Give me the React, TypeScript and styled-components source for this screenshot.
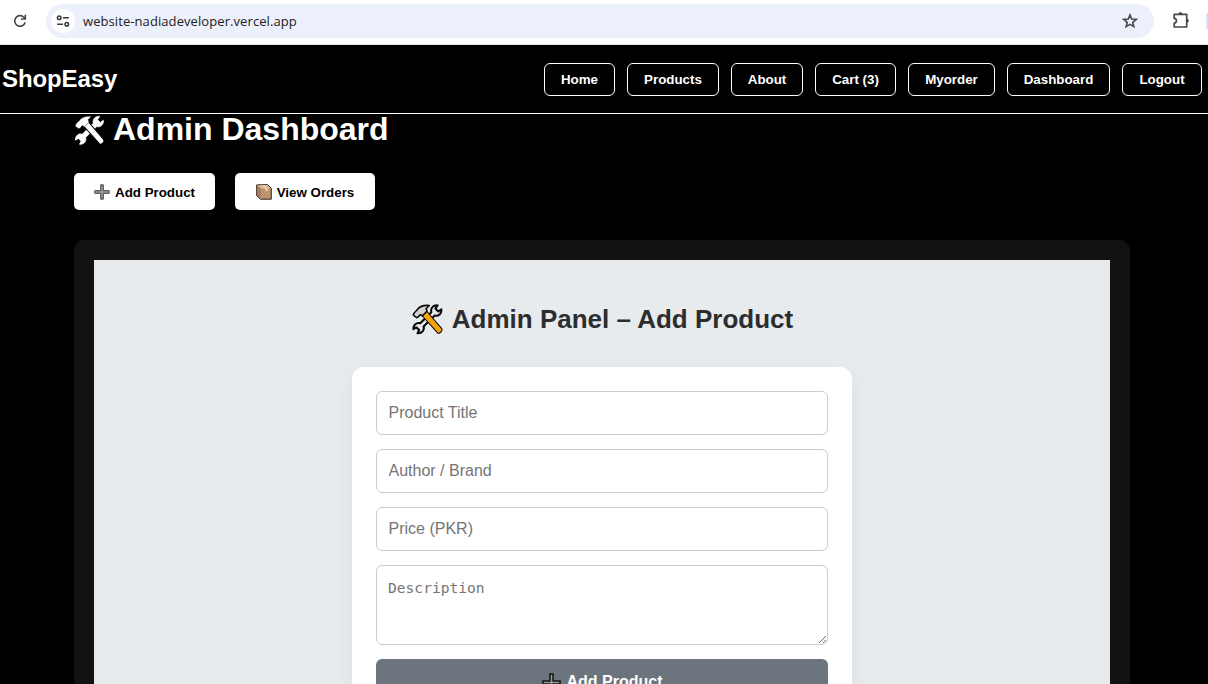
import React from 'react';
import styled, { createGlobalStyle } from 'styled-components';

const Global = createGlobalStyle`
  * { box-sizing: border-box; }
  body { margin: 0; background: #000; font-family: "Liberation Sans", Arial, sans-serif; overflow: hidden; }
  h1, h2 { margin: 0; }
  button, input { font-family: inherit; }
`;

const Screen = styled.div`
  height: 684px;
  overflow: hidden;
  display: flex;
  flex-direction: column;
`;

const BrowserBar = styled.div`
  flex: none;
  height: 45px;
  background: #fff;
  border-bottom: 1px solid #dfe1e5;
  display: flex;
  align-items: flex-start;
  overflow: hidden;
`;

const Reload = styled.svg`
  flex: none;
  width: 16px;
  height: 16px;
  margin: 13px 18px 0 12px;
`;

const AddressBar = styled.div`
  flex: none;
  width: 1108px;
  height: 34px;
  margin-top: 4px;
  padding: 0 16px 0 5px;
  border-radius: 17px;
  background: #ecf0fa;
  display: flex;
  align-items: center;
`;

const SiteInfo = styled.span`
  width: 24px;
  height: 24px;
  border-radius: 50%;
  background: #fff;
  display: flex;
  align-items: center;
  justify-content: center;
`;

const Url = styled.span`
  flex: 1;
  margin-left: 8px;
  font: 13px/18px "Open Sans", "Noto Sans", sans-serif;
  letter-spacing: 0.08px;
  color: #1f2023;
`;

const Extension = styled.svg`
  flex: none;
  width: 20px;
  height: 20px;
  margin: 10px 0 0 17px;
`;

const ToolbarDivider = styled.span`
  flex: none;
  width: 2px;
  height: 16px;
  margin: 13px 0 0 15px;
  background: #d3e3fd;
`;

const Header = styled.header`
  flex: none;
  height: 69px;
  padding: 0 6px 0 2px;
  border-bottom: 1px solid #fff;
  background: #000;
  display: flex;
  align-items: center;
  justify-content: space-between;
`;

const Brand = styled.div`
  font-size: 24px;
  font-weight: 700;
  letter-spacing: -0.1px;
  color: #fff;
`;

const Nav = styled.nav`
  display: flex;
  gap: 12px;
`;

const NavButton = styled.button<{ $width: number }>`
  width: ${(p) => p.$width}px;
  height: 33px;
  padding: 0;
  border: 1px solid #fff;
  border-radius: 6px;
  background: #000;
  color: #fff;
  font-size: 13.333px;
  font-weight: 700;
`;

const Main = styled.main`
  width: 1056px;
  margin-left: 74px;
`;

const PageTitle = styled.h1`
  height: 37px;
  margin-top: -3px;
  display: flex;
  align-items: center;
  gap: 8px;
  color: #fff;
  font-size: 32px;
  line-height: 37px;
  white-space: nowrap;
  svg { margin-top: 2px; }
`;

const Actions = styled.div`
  display: flex;
  gap: 20px;
  margin-top: 25px;
`;

const ActionButton = styled.button<{ $width: number }>`
  width: ${(p) => p.$width}px;
  height: 37px;
  padding: 2px 0 0;
  border: 0;
  border-radius: 5px;
  background: #fff;
  color: #000;
  display: flex;
  align-items: center;
  justify-content: center;
  gap: 5px;
  font-size: 13.333px;
  font-weight: 700;
  svg { margin-top: -1px; }
`;

const Panel = styled.section`
  margin-top: 30px;
  height: 600px;
  padding: 20px;
  border-radius: 10px;
  background: #111;
`;

const PanelBody = styled.div`
  height: 100%;
  padding-top: 43px;
  background: #e7ebee;
  display: flex;
  flex-direction: column;
  align-items: center;
`;

const PanelTitle = styled.h2`
  display: flex;
  align-items: center;
  gap: 9px;
  height: 32px;
  padding-left: 1px;
  color: #2d2d2f;
  font-size: 26px;
  line-height: 32px;
  white-space: nowrap;
`;

const Form = styled.form`
  width: 500px;
  height: 420px;
  margin-top: 32px;
  padding: 24px;
  border-radius: 12px;
  background: #fff;
  box-shadow: 0 6px 18px rgba(0, 0, 0, 0.06);
  display: flex;
  flex-direction: column;
  gap: 14px;
`;

const Field = styled.input`
  flex: none;
  width: 100%;
  height: 44px;
  padding: 0 11.5px;
  border: 1px solid #ccc;
  border-radius: 6px;
  background: #fff;
  font-size: 16px;
  &::placeholder { color: #757575; opacity: 1; }
`;

const Description = styled.textarea`
  flex: none;
  display: block;
  width: 100%;
  height: 80px;
  padding: 12px 11px;
  border: 1px solid #ccc;
  border-radius: 6px;
  background: #fff;
  resize: vertical;
  font: 14.6px/19px "DejaVu Sans Mono", monospace;
  &::placeholder { color: #757575; opacity: 1; }
`;

const Submit = styled.button`
  flex: none;
  width: 100%;
  height: 46px;
  padding: 0;
  border: 0;
  border-radius: 6px;
  background: #6c757d;
  color: #fff;
  display: flex;
  align-items: center;
  justify-content: center;
  gap: 6px;
  font-size: 16px;
  font-weight: 700;
`;

const WRENCH =
  'M24.8 1.4C20.6 .8 17.7 4.2 18.7 8L8 18.6C4.3 17.4 1.1 20.4 1.4 24.3L4.4 22.7L6.9 25.2L5.4 28.3C9.6 28.7 12.3 25.4 11.2 21.8L22 11.2C25.6 12.3 28.8 9.3 28.4 5.2L25.5 7.2L22.7 4.5Z';
const HAMMER_HEAD = 'M1.3 10.8C1 9 3 7.5 4.6 6.1C7 2.2 11 .9 16.8 1.4L13.6 4.6L14.6 6.8L9.9 11.6L8.1 10.2C6.8 11 7 12.6 4.5 13.3Z';
const HANDLE = 'M9.4 10.9L13.9 6.5L28.6 23.6C30 25.6 27 29.3 24.8 28Z';

function Tools({ mono = false, size }: { mono?: boolean; size: number }) {
  const stroke = mono ? '#000' : '#080808';
  return (
    <svg width={size} height={size} viewBox="0 0 30 30" strokeLinejoin="round" stroke={stroke}>
      <path d={WRENCH} fill={mono ? '#fff' : '#e9e9e9'} stroke={mono ? '#fff' : stroke} strokeWidth={mono ? 0.8 : 2} />
      <path d={HANDLE} fill={mono ? '#fff' : '#f5a30a'} strokeWidth="1" />
      <path d={HAMMER_HEAD} fill={mono ? '#fff' : '#d2d2d2'} strokeWidth={mono ? 0.4 : 1.5} />
    </svg>
  );
}

function Plus({ size, dark = false }: { size: number; dark?: boolean }) {
  return (
    <svg width={size} height={size} viewBox="0 0 16 16">
      <path
        d="M6.7 .8h2.6v5.9h5.9v2.6H9.3v5.9H6.7V9.3H.8V6.7h5.9z"
        fill="#989898"
        stroke={dark ? '#151515' : '#444'}
        strokeWidth={dark ? 1.3 : 1}
      />
    </svg>
  );
}

function Box() {
  return (
    <svg width="16" height="16" viewBox="0 0 16 16" strokeLinejoin="round">
      <path d="M.7 .9 11.5 .6 15.3 4.3V15.2H4.6L.7 11.8z" fill="#bd946e" stroke="#33261d" strokeWidth="1" />
      <path d="M1.2 1.4 11.3 1.1 14.7 4.5H4.8z" fill="#dfbb96" />
      <path d="M1.2 1.6 4.7 4.6v10L1.2 11.6z" fill="#a87f5d" />
      <path d="M6 1.2h2.5l3 3.2v3L9.3 6.6V4.5z" fill="#ecd6b8" />
      <path d="M2 9.5l1.7 1.3v1.5L2 11z" fill="#e04b43" />
    </svg>
  );
}

const NAV = [
  { label: 'Home', width: 71 },
  { label: 'Products', width: 92 },
  { label: 'About', width: 72 },
  { label: 'Cart (3)', width: 81 },
  { label: 'Myorder', width: 87 },
  { label: 'Dashboard', width: 103 },
  { label: 'Logout', width: 80 },
];

export default function App() {
  return (
    <Screen>
      <Global />
      <BrowserBar>
        <Reload viewBox="0 0 16 16" fill="none" stroke="#474747" strokeWidth="1.6">
          <path d="M13.2 9.2A5.3 5.3 0 1 1 11.8 4.2L13.3 5.8" />
          <path d="M13.3 1.8V6H9" />
        </Reload>
        <AddressBar>
          <SiteInfo>
            <svg width="14" height="14" viewBox="0 0 14 14" fill="none" stroke="#37383b" strokeWidth="1.5">
              <circle cx="3.2" cy="3.8" r="1.8" />
              <path d="M7 3.8h5.8M1.2 10.2H7" />
              <circle cx="10.8" cy="10.2" r="1.8" />
            </svg>
          </SiteInfo>
          <Url>website-nadiadeveloper.vercel.app</Url>
          <svg width="16" height="16" viewBox="0 0 16 16" fill="none" stroke="#474747" strokeWidth="1.6">
            <path d="M8 2l1.7 4 4.5.4-3.4 2.9 1 4.4L8 11.4l-3.8 2.3 1-4.4-3.4-2.9L6.3 6z" />
          </svg>
        </AddressBar>
        <Extension viewBox="0 0 20 20" fill="none" stroke="#474747" strokeWidth="1.7" strokeLinejoin="round">
          <path d="M3.2 4.3H15.7V17H3.2V13.2C6.2 12.8 6.2 8.7 3.2 8.3Z" />
          <path d="M7.8 4C7.8 2.1 11 2.1 11 4ZM16 9.2C18.1 9.2 18.1 12.2 16 12.2Z" fill="#474747" strokeWidth=".8" />
        </Extension>
        <ToolbarDivider />
      </BrowserBar>
      <Header>
        <Brand>ShopEasy</Brand>
        <Nav>
          {NAV.map((item) => (
            <NavButton key={item.label} $width={item.width}>{item.label}</NavButton>
          ))}
        </Nav>
      </Header>
      <Main>
        <PageTitle><Tools mono size={31} />Admin Dashboard</PageTitle>
        <Actions>
          <ActionButton $width={141}><Plus size={16} />Add Product</ActionButton>
          <ActionButton $width={140}><Box />View Orders</ActionButton>
        </Actions>
        <Panel>
          <PanelBody>
            <PanelTitle><Tools size={31} />Admin Panel – Add Product</PanelTitle>
            <Form>
              <Field placeholder="Product Title" />
              <Field placeholder="Author / Brand" />
              <Field placeholder="Price (PKR)" />
              <Description placeholder="Description" />
              <Submit type="button"><Plus size={19} dark />Add Product</Submit>
            </Form>
          </PanelBody>
        </Panel>
      </Main>
    </Screen>
  );
}
